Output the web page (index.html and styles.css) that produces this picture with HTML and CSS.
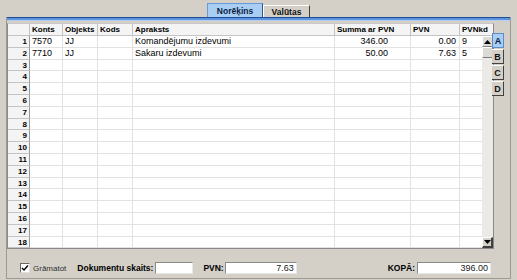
FILE: index.html
```html
<!DOCTYPE html>
<html>
<head>
<meta charset="utf-8">
<link rel="stylesheet" href="styles.css">
</head>
<body>
<div class="win">
  <div class="tabbar">
    <div class="tab active">Norēķins</div>
    <div class="tab">Valūtas</div>
  </div>
  <div class="panel">
    <div class="blueline"></div>
    <div class="content">
      <div class="grid">
        <div class="hrow">
          <div class="hc c0"></div>
          <div class="hc c1">Konts</div>
          <div class="hc c2">Objekts</div>
          <div class="hc c3">Kods</div>
          <div class="hc c4">Apraksts</div>
          <div class="hc c5">Summa ar PVN</div>
          <div class="hc c6">PVN</div>
          <div class="hc c7h">PVNkd</div>
        </div>
        <div class="body">
          <div class="rows">
            <div class="row"><div class="rn c0">1</div><div class="dc c1">7570</div><div class="dc c2">JJ</div><div class="dc c3"></div><div class="dc c4">Komandējumu izdevumi</div><div class="dc c5 num">346.00</div><div class="dc c6 num2">0.00</div><div class="dc c7">9</div></div>
            <div class="row"><div class="rn c0">2</div><div class="dc c1">7710</div><div class="dc c2">JJ</div><div class="dc c3"></div><div class="dc c4">Sakaru izdevumi</div><div class="dc c5 num">50.00</div><div class="dc c6 num2">7.63</div><div class="dc c7">5</div></div>
            <div class="row"><div class="rn c0">3</div><div class="dc c1"></div><div class="dc c2"></div><div class="dc c3"></div><div class="dc c4"></div><div class="dc c5"></div><div class="dc c6"></div><div class="dc c7"></div></div>
            <div class="row"><div class="rn c0">4</div><div class="dc c1"></div><div class="dc c2"></div><div class="dc c3"></div><div class="dc c4"></div><div class="dc c5"></div><div class="dc c6"></div><div class="dc c7"></div></div>
            <div class="row"><div class="rn c0">5</div><div class="dc c1"></div><div class="dc c2"></div><div class="dc c3"></div><div class="dc c4"></div><div class="dc c5"></div><div class="dc c6"></div><div class="dc c7"></div></div>
            <div class="row"><div class="rn c0">6</div><div class="dc c1"></div><div class="dc c2"></div><div class="dc c3"></div><div class="dc c4"></div><div class="dc c5"></div><div class="dc c6"></div><div class="dc c7"></div></div>
            <div class="row"><div class="rn c0">7</div><div class="dc c1"></div><div class="dc c2"></div><div class="dc c3"></div><div class="dc c4"></div><div class="dc c5"></div><div class="dc c6"></div><div class="dc c7"></div></div>
            <div class="row"><div class="rn c0">8</div><div class="dc c1"></div><div class="dc c2"></div><div class="dc c3"></div><div class="dc c4"></div><div class="dc c5"></div><div class="dc c6"></div><div class="dc c7"></div></div>
            <div class="row"><div class="rn c0">9</div><div class="dc c1"></div><div class="dc c2"></div><div class="dc c3"></div><div class="dc c4"></div><div class="dc c5"></div><div class="dc c6"></div><div class="dc c7"></div></div>
            <div class="row"><div class="rn c0">10</div><div class="dc c1"></div><div class="dc c2"></div><div class="dc c3"></div><div class="dc c4"></div><div class="dc c5"></div><div class="dc c6"></div><div class="dc c7"></div></div>
            <div class="row"><div class="rn c0">11</div><div class="dc c1"></div><div class="dc c2"></div><div class="dc c3"></div><div class="dc c4"></div><div class="dc c5"></div><div class="dc c6"></div><div class="dc c7"></div></div>
            <div class="row"><div class="rn c0">12</div><div class="dc c1"></div><div class="dc c2"></div><div class="dc c3"></div><div class="dc c4"></div><div class="dc c5"></div><div class="dc c6"></div><div class="dc c7"></div></div>
            <div class="row"><div class="rn c0">13</div><div class="dc c1"></div><div class="dc c2"></div><div class="dc c3"></div><div class="dc c4"></div><div class="dc c5"></div><div class="dc c6"></div><div class="dc c7"></div></div>
            <div class="row"><div class="rn c0">14</div><div class="dc c1"></div><div class="dc c2"></div><div class="dc c3"></div><div class="dc c4"></div><div class="dc c5"></div><div class="dc c6"></div><div class="dc c7"></div></div>
            <div class="row"><div class="rn c0">15</div><div class="dc c1"></div><div class="dc c2"></div><div class="dc c3"></div><div class="dc c4"></div><div class="dc c5"></div><div class="dc c6"></div><div class="dc c7"></div></div>
            <div class="row"><div class="rn c0">16</div><div class="dc c1"></div><div class="dc c2"></div><div class="dc c3"></div><div class="dc c4"></div><div class="dc c5"></div><div class="dc c6"></div><div class="dc c7"></div></div>
            <div class="row"><div class="rn c0">17</div><div class="dc c1"></div><div class="dc c2"></div><div class="dc c3"></div><div class="dc c4"></div><div class="dc c5"></div><div class="dc c6"></div><div class="dc c7"></div></div>
            <div class="row"><div class="rn c0">18</div><div class="dc c1"></div><div class="dc c2"></div><div class="dc c3"></div><div class="dc c4"></div><div class="dc c5"></div><div class="dc c6"></div><div class="dc c7"></div></div>
          </div>
          <div class="sbar">
            <div class="sbtn"><svg width="7" height="4" viewBox="0 0 7 4"><path d="M3.5 0L7 4H0z" fill="#000"/></svg></div>
            <div class="thumb"></div>
            <div class="track"></div>
            <div class="sbtn dn"><svg width="7" height="4" viewBox="0 0 7 4"><path d="M0 0H7L3.5 4z" fill="#000"/></svg></div>
          </div>
        </div>
      </div>
      <div class="sidetabs">
        <div class="stab on">A</div>
        <div class="stab">B</div>
        <div class="stab">C</div>
        <div class="stab">D</div>
      </div>
    </div>
    <div class="footer">
      <span class="chk"><svg width="8" height="8" viewBox="0 0 8 8"><path d="M1 4L3 6L7 1.5" fill="none" stroke="#000" stroke-width="1.4"/></svg></span>
      <span class="lbl">Grāmatot</span>
      <span class="blbl l1">Dokumentu skaits:</span>
      <span class="inp w1"></span>
      <span class="blbl l2">PVN:</span>
      <span class="inp w2">7.63</span>
      <span class="blbl l3">KOPĀ:</span>
      <span class="inp w3">396.00</span>
    </div>
  </div>
</div>
</body>
</html>
```
FILE: styles.css
```css
* { box-sizing: border-box; }
body {
  margin: 0;
  background: #d4d0c8;
  font-family: "Liberation Sans", Arial, sans-serif;
  color: #000;
}
.win { width: 517px; height: 280px; }
.tabbar {
  height: 17px;
  display: flex;
  align-items: flex-end;
  padding-left: 207px;
}
.tab {
  font-size: 8.5px;
  font-weight: bold;
  height: 12px;
  width: 47px;
  display: flex;
  align-items: center;
  justify-content: center;
  border-top: 1px solid #fff;
  border-left: 1px solid #fff;
  border-right: 1px solid #404040;
  background: #d4d0c8;
  color: #101010;
}
.tab.active {
  width: 56px;
  height: 14px;
  background: #a8cef4;
  border-top: 1px solid #6a9ad6;
  border-left: 1px solid #6a9ad6;
  border-right: 1px solid #33568a;
  color: #0b1e44;
}
.panel {
  margin-left: 6px;
  width: 505px;
  height: 262px;
  border-left: 1px solid #9c9a94;
  border-right: 1px solid #9c9a94;
  border-bottom: 1px solid #9c9a94;
}
.blueline {
  height: 4px;
  border-top: 1px solid #1f4e98;
  background: #5e94de;
  border-bottom: 1px solid #b5cff0;
}
.content {
  display: flex;
  padding-top: 2px;
}
.grid {
  width: 487px;
  border: 1px solid #8a8a8a;
  border-top-color: #c8c8c8;
  background: #fff;
}
.hrow {
  display: flex;
  height: 12px;
}
.hc {
  font-size: 8px;
  font-weight: bold;
  line-height: 11px;
  padding-left: 2px;
  background: #f4f4f4;
  border-right: 1px solid #c4c4c4;
  border-bottom: 1px solid #c4c4c4;
  white-space: nowrap;
  overflow: hidden;
}
.c0 { width: 22px; }
.c1 { width: 33px; }
.c2 { width: 35px; }
.c3 { width: 35px; }
.c4 { width: 202px; }
.c5 { width: 76px; }
.c6 { width: 49px; }
.c7 { width: 22px; }
.c7h { width: 33px; border-right: none; }
.body { display: flex; }
.rows { display: flex; flex-direction: column; }
.row { display: flex; height: 11.8px; }
.rn {
  font-size: 8px;
  font-weight: bold;
  text-align: right;
  padding-right: 2px;
  line-height: 11px;
  background: #f4f4f4;
  border-right: 1px solid #9a9a9a;
  border-bottom: 1px solid #c4c4c4;
}
.dc {
  font-size: 9px;
  line-height: 11px;
  padding-left: 2px;
  border-right: 1px solid #e2e2e2;
  border-bottom: 1px solid #e2e2e2;
  white-space: nowrap;
  overflow: hidden;
}
.dc.c7 { border-right: none; }
.num { text-align: right; padding-right: 22px; }
.num2 { text-align: right; padding-right: 3px; }
.sbar {
  width: 12px;
  display: flex;
  flex-direction: column;
  background: #ebeae6;
}
.sbtn {
  height: 11px;
  display: flex;
  align-items: center;
  justify-content: center;
  background: #dcdad4;
  border-top: 1px solid #fff;
  border-left: 1px solid #fff;
  border-right: 1px solid #808080;
  border-bottom: 1px solid #808080;
}
.sbtn.dn {
  background: #d4d0c8;
  border-right: 2px solid #404040;
  border-bottom: 2px solid #404040;
}
.thumb {
  height: 11px;
  background: #dcdad4;
  border-top: 1px solid #fff;
  border-left: 1px solid #fff;
  border-right: 1px solid #808080;
  border-bottom: 1px solid #808080;
}
.track { flex: 1; }
.sidetabs {
  display: flex;
  flex-direction: column;
  gap: 1px;
  padding-top: 10px;
  margin-left: -2px;
}
.stab {
  width: 12px;
  height: 15px;
  font-size: 9px;
  font-weight: bold;
  display: flex;
  align-items: center;
  justify-content: center;
  background: #d4d0c8;
  border-top: 1px solid #fff;
  border-right: 1px solid #404040;
  border-bottom: 1px solid #404040;
  color: #101010;
}
.stab.on {
  background: #a8cef4;
  border: 1px solid #5f8cc8;
  color: #0b1e44;
}
.footer {
  display: flex;
  align-items: center;
  height: 29px;
  padding-left: 13px;
  padding-top: 9px;
}
.chk {
  width: 10px;
  height: 10px;
  background: #fff;
  border: 1px solid #6a6a6a;
  border-right-color: #e0e0e0;
  border-bottom-color: #e0e0e0;
  display: flex;
  align-items: center;
  justify-content: center;
}
.lbl {
  font-size: 8px;
  color: #303030;
  margin-left: 3px;
}
.blbl {
  font-size: 8.5px;
  font-weight: bold;
}
.l1 { margin-left: 11px; }
.l2 { margin-left: 10px; }
.l3 { margin-left: 91px; }
.inp {
  height: 12px;
  background: #fff;
  border: 1px solid #8a8a8a;
  border-right-color: #e8e8e8;
  border-bottom-color: #e8e8e8;
  font-size: 9px;
  line-height: 10px;
  text-align: right;
  padding-right: 2px;
  color: #202020;
}
.w1 { width: 38px; margin-left: 2px; }
.w2 { width: 72px; margin-left: 1px; }
.w3 { width: 74px; margin-left: 2px; }
```
